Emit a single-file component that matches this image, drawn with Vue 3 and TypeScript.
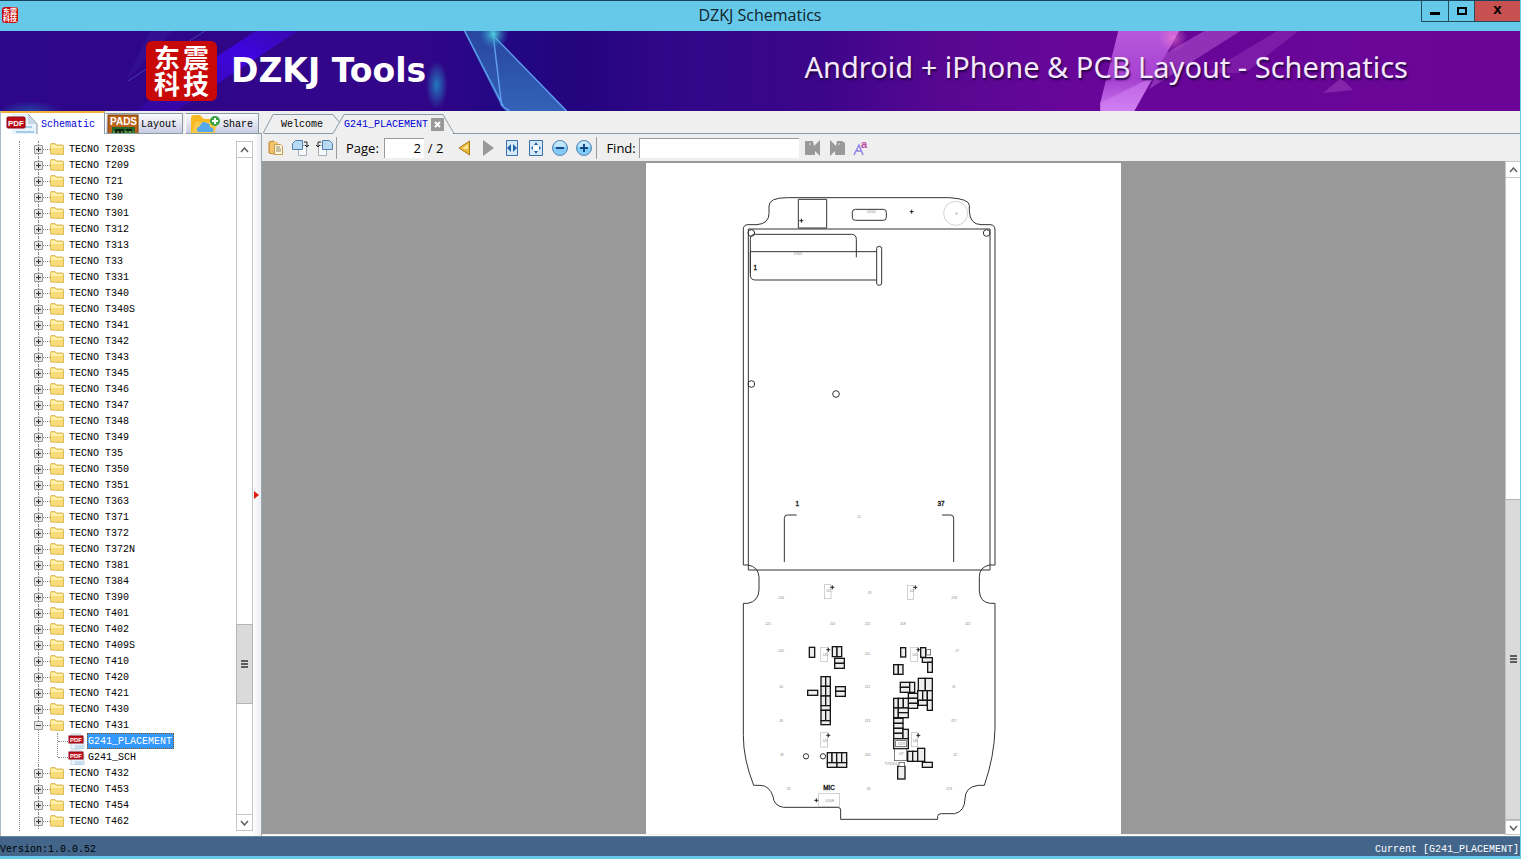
<script setup lang="ts">
import { ref } from 'vue'

interface Folder {
  name: string
  files?: string[]
}

const names = [
  'T203S', 'T209', 'T21', 'T30', 'T301', 'T312', 'T313', 'T33', 'T331', 'T340', 'T340S', 'T341',
  'T342', 'T343', 'T345', 'T346', 'T347', 'T348', 'T349', 'T35', 'T350', 'T351', 'T363', 'T371',
  'T372', 'T372N', 'T381', 'T384', 'T390', 'T401', 'T402', 'T409S', 'T410', 'T420', 'T421', 'T430',
  'T431', 'T432', 'T453', 'T454', 'T462',
]
const folders: Folder[] = names.map((n) => ({
  name: 'TECNO ' + n,
  files: n === 'T431' ? ['G241_PLACEMENT', 'G241_SCH'] : undefined,
}))

const selected = ref('G241_PLACEMENT')
const page = ref('2')
const query = ref('')

type Box = [number, number, number, number]

const leftParts: Box[] = [
  [208, 37, 16, 30], [277, 35, 14, 30], [291, 35, 14, 30], [284, 70, 29, 15], [284, 85, 29, 15],
  [243, 125, 14, 29], [257, 125, 14, 29], [243, 154, 14, 29], [257, 154, 14, 29],
  [243, 183, 14, 29], [257, 183, 14, 29], [243, 212, 28, 14], [243, 226, 14, 31], [257, 226, 14, 31],
  [243, 257, 28, 12], [203, 166, 30, 15], [287, 155, 29, 14], [287, 169, 29, 15],
  [262, 353, 14, 30], [276, 353, 14, 30], [290, 353, 15, 30], [305, 353, 15, 30],
  [262, 383, 29, 14], [291, 383, 29, 14],
]
const rightParts: Box[] = [
  [107, 38, 15, 28], [167, 38, 15, 29], [172, 68, 30, 14], [188, 82, 14, 30],
  [86, 89, 14, 29], [100, 89, 14, 29], [106, 142, 28, 15], [106, 157, 28, 15], [134, 142, 15, 30],
  [160, 130, 21, 37], [181, 130, 21, 37], [130, 175, 28, 15], [130, 190, 28, 15], [130, 205, 28, 15],
  [158, 167, 15, 29], [173, 167, 14, 29], [187, 167, 15, 29], [160, 196, 27, 15], [187, 196, 15, 30],
  [86, 190, 14, 29], [100, 190, 15, 29], [115, 190, 15, 29], [86, 219, 14, 29], [100, 219, 30, 14],
  [100, 233, 30, 15], [86, 250, 28, 15], [86, 265, 28, 15], [86, 280, 28, 15], [86, 295, 28, 16],
  [114, 283, 16, 28], [86, 311, 44, 30], [128, 349, 15, 30], [143, 349, 15, 30],
  [158, 340, 21, 39], [172, 382, 30, 15], [98, 394, 22, 38],
]
const thinParts: Box[] = [[185, 44, 12, 16], [92, 317, 32, 18], [102, 382, 16, 12], [88, 342, 37, 35]]
const fine: [number, number, string][] = [
  [676, 150, 'U202'], [456, 276, 'X301'], [639, 1065, 'J1'], [932, 155, 'K'],
  [405, 1309, 'J16'], [670, 1294, 'J9'], [924, 1309, 'J19'],
  [366, 1387, 'J21'], [559, 1387, 'J14'], [664, 1387, 'J15'], [770, 1387, 'J18'], [965, 1387, 'J22'],
  [405, 1467, 'J20'], [664, 1477, 'J11'], [933, 1467, 'J7'],
  [405, 1574, 'J4'], [664, 1574, 'J12'], [923, 1574, 'J5'],
  [405, 1676, 'J6'], [664, 1676, 'J13'], [923, 1676, 'J17'],
  [407, 1780, 'J8'], [664, 1778, 'J10'], [927, 1780, 'J2'],
  [427, 1881, 'J3'], [667, 1881, 'J0'], [909, 1881, 'J23'],
  [548, 1286, 'U1'], [798, 1286, 'U2'], [538, 1480, 'U3'], [806, 1480, 'U4'],
  [538, 1736, 'U5'], [808, 1736, 'U6'], [551, 1916, 'U108'], [735, 1806, 'TVS501'],
  [766, 1746, 'U19'], [766, 1776, 'U7'],
]
const pluses: [number, number][] = [
  [466, 173], [797, 146], [559, 1273], [808, 1273], [547, 1460], [817, 1460], [547, 1717], [817, 1717], [511, 1912],
]
const outlines: Box[] = [
  [535, 1265, 20, 42], [784, 1267, 18, 42], [524, 1453, 21, 42], [794, 1453, 21, 42],
  [524, 1709, 21, 43], [796, 1709, 19, 42], [518, 1891, 63, 40],
]
</script>

<template>
  <div class="window">
    <header class="titlebar">
      <svg class="smallseal" width="16" height="16" aria-hidden="true">
        <rect width="16" height="16" rx="3" fill="#c90808" />
        <g class="han" font-size="7"><text x="1" y="7">东震</text><text x="1" y="14">科技</text></g>
      </svg>
      <h1>DZKJ Schematics</h1>
      <div class="winbtns">
        <button class="wb" aria-label="Minimize"><svg width="10" height="10"><path d="M0 6h10v3H0z" /></svg></button>
        <button class="wb mid" aria-label="Maximize"><svg width="10" height="10"><path fill-rule="evenodd" d="M0 1h10v8H0zM2 3v4h6V3z" /></svg></button>
        <button class="wb close" aria-label="Close">X</button>
      </div>
    </header>

    <section class="banner">
      <svg class="art" viewBox="0 0 1521 80" preserveAspectRatio="none" aria-hidden="true">
        <defs>
          <linearGradient id="bg">
            <stop offset="0" stop-color="#2d0789" /><stop offset=".27" stop-color="#330589" />
            <stop offset=".33" stop-color="#220783" /><stop offset=".38" stop-color="#23047e" />
            <stop offset=".44" stop-color="#300788" /><stop offset=".54" stop-color="#3c058a" />
            <stop offset=".62" stop-color="#570792" /><stop offset=".7" stop-color="#670699" />
            <stop offset="1" stop-color="#6b0597" />
          </linearGradient>
          <linearGradient id="beam" x1="0" y1="1" x2="1" y2="0">
            <stop offset="0" stop-color="#4209d8" stop-opacity=".2" /><stop offset=".7" stop-color="#3e05df" /><stop offset="1" stop-color="#3a08b8" stop-opacity=".8" />
          </linearGradient>
          <linearGradient id="glass" x1="0" y1="0" x2="0" y2="1">
            <stop offset="0" stop-color="#2850a4" /><stop offset="1" stop-color="#3673c2" />
          </linearGradient>
          <linearGradient id="pink" x1="0" y1="0" x2="0" y2="1">
            <stop offset="0" stop-color="#b859dc" /><stop offset=".6" stop-color="#a640d0" /><stop offset="1" stop-color="#c878f0" />
          </linearGradient>
          <radialGradient id="glow"><stop offset="0" stop-color="#2379bd" /><stop offset="1" stop-color="#2379bd" stop-opacity="0" /></radialGradient>
          <radialGradient id="glow2"><stop offset="0" stop-color="#4fd0dc" /><stop offset="1" stop-color="#2379bd" stop-opacity="0" /></radialGradient>
          <radialGradient id="spark"><stop offset="0" stop-color="#f480cf" stop-opacity=".6" /><stop offset="1" stop-color="#f480cf" stop-opacity="0" /></radialGradient>
        </defs>
        <rect width="1521" height="80" fill="url(#bg)" />
        <path d="M256 0h42L176 80h-42z" fill="url(#beam)" />
        <path d="M150 0h22L126 50zM205 0L126 52" fill="#4436a8" opacity=".2" />
        <path d="M205 0L128 50" stroke="#5366bd" opacity=".6" />
        <ellipse cx="30" cy="80" rx="32" ry="10" fill="url(#glow)" opacity=".5" />
        <ellipse cx="437" cy="54" rx="11" ry="24" fill="url(#glow)" />
        <path d="M464 0h29l1 5L567 80h-61l-4-4z" fill="url(#glass)" opacity=".85" />
        <path d="M465 0L504 76L510 80M493 0L502 75M494 5L567 80" fill="none" stroke="#609cef" stroke-width="1.5" />
        <circle cx="494" cy="3" r="15" fill="url(#glow2)" />
        <path d="M1119 0h61l-45 80h-34v-8z" fill="url(#pink)" />
        <path d="M1101 72L1167 39L1152 50L1135 80h-34z" fill="#d784f4" opacity=".5" />
        <path d="M1205 0h36L1150 58L1167 22z" fill="#a648c8" opacity=".65" />
        <path d="M1278 0h21l-53 42h-38z" fill="#9a3cbd" opacity=".4" />
        <path d="M1342 47l12 12l-30 3z" fill="#9837b8" opacity=".6" />
        <circle cx="1174" cy="7" r="14" fill="url(#spark)" />
      </svg>
      <svg class="bigseal" width="71" height="60" role="img" aria-label="东震科技">
        <rect width="71" height="60" rx="6" fill="#c90808" />
        <g class="han" font-size="26">
          <text x="8" y="27">东</text><text x="37" y="27">震</text>
          <text x="8" y="53">科</text><text x="37" y="53">技</text>
        </g>
      </svg>
      <strong class="brand">DZKJ Tools</strong>
      <span class="slogan">Android + iPhone &amp; PCB Layout - Schematics</span>
    </section>

    <main class="body">
      <aside class="side">
        <nav class="sidetabs">
          <button class="stab active">
            <svg width="32" height="20" viewBox="0 0 32 20" aria-hidden="true">
              <path d="M6 0h16l9 10v10H6z" fill="#e8f2fa" /><path d="M22 0l9 10v10" fill="none" stroke="#8996a4" />
              <path d="M22 1v9h8z" fill="#c5d7e7" /><path d="M12 12h14v2H12zM10 17h18v2H10z" fill="#a5cce9" />
              <rect x="1" y="3" width="18" height="11" rx="1" fill="#bd0c16" stroke="#8e0710" />
              <text x="2" y="12" font-size="8" font-weight="bold" fill="#fff">PDF</text>
            </svg>
            <span>Schematic</span>
          </button>
          <button class="stab">
            <svg width="32" height="20" viewBox="0 0 32 20" aria-hidden="true">
              <rect x="1" y="1" width="30" height="22" fill="#bd6318" stroke="#76400d" />
              <rect x="5" y="13" width="23" height="7" fill="#26672b" /><path d="M8 15h9v5H8zM19 15h6v2h-6z" fill="#11220f" /><path d="M6 18h21" stroke="#8bc458" stroke-dasharray="2 2" />
              <text x="3" y="11" font-size="10" font-weight="bold" fill="#fff">PADS</text>
            </svg>
            <span>Layout</span>
          </button>
          <button class="stab">
            <svg width="32" height="20" viewBox="0 0 32 20" aria-hidden="true">
              <path d="M3 20V4q0-3 3-3h6l4 4h8q3 0 3 3v12z" fill="#f9b923" /><path d="M3 20L8 8h22l-4 12z" fill="#fcca4a" />
              <path d="M10 18q-3-4 2-6q2-6 7-3q3 0 3 4q5 1 3 5z" fill="#55a9ec" />
              <circle cx="27" cy="7" r="5" fill="#37a446" /><path d="M27 4v6M24 7h6" stroke="#fff" stroke-width="2" />
            </svg>
            <span>Share</span>
          </button>
          <span class="tabfill"></span>
        </nav>
        <div class="sidebody">
          <div class="treewrap">
            <ul class="tree">
              <li v-for="f in folders" :key="f.name">
                <button class="row">
                  <svg class="exp" width="9" height="9" aria-hidden="true"><path d="M.5.5h8v8h-8z" fill="#e6e6e6" stroke="#9b9b9b" /><path :d="f.files ? 'M2 4.5h5' : 'M2 4.5h5M4.5 2v5'" stroke="#333" /></svg>
                  <i class="dots"></i>
                  <svg width="14" height="12" viewBox="0 0 14 12" aria-hidden="true"><path d="M.5 11V1.500q0-1 1-1h3.500l1 1.500h6.500q1 0 1 1v8.500z" fill="#f8dc7c" stroke="#dfb958" /><path d="M1 4h12M1 3h5" stroke="#fff0a8" stroke-width="2" /></svg>
                  <span class="name">{{ f.name }}</span>
                </button>
                <ul v-if="f.files" class="sub">
                  <li v-for="c in f.files" :key="c">
                    <button class="row child" @click="selected = c">
                      <i class="dots"></i>
                      <svg width="17" height="16" viewBox="0 0 17 16" aria-hidden="true">
                        <path d="M3 1h9l4 4v11H3z" fill="#eaf3fa" stroke="#c5d5e2" /><path d="M7 13h8M7 15h8" stroke="#9fc7e4" />
                        <rect x="1" y="3" width="14" height="7" fill="#c4131c" stroke="#8e0710" />
                        <text x="2" y="9" font-size="6" font-weight="bold" fill="#fff">PDF</text>
                      </svg>
                      <span class="name" :class="{ sel: selected === c }">{{ c }}</span>
                    </button>
                  </li>
                </ul>
              </li>
            </ul>
          </div>
          <div class="scroll left">
            <button aria-label="Scroll up"><svg width="9" height="6"><path d="M1 5L4.500 1L8 5" /></svg></button>
            <div class="track"><div class="thumb"><i></i></div></div>
            <button aria-label="Scroll down"><svg width="9" height="6"><path d="M1 1L4.500 5L8 1" /></svg></button>
          </div>
          <div class="splitter"><svg width="5" height="8" aria-hidden="true"><path d="M0 0l5 4l-5 4z" fill="#e01b10" /></svg></div>
        </div>
      </aside>

      <section class="doc">
        <nav class="doctabs">
          <svg class="tabshape" width="191" height="23" aria-hidden="true">
            <path d="M0 22.500L10 3.500H70L77 12" fill="none" stroke="#8a9ba8" />
            <path d="M1 22.500H70L81 3.500H180L191 22.500" fill="none" stroke="#8a9ba8" />
            <path d="M71 22.500h119" stroke="#efefef" />
          </svg>
          <button class="dtab first">Welcome</button>
          <button class="dtab current">G241_PLACEMENT</button>
          <button class="tabclose" aria-label="Close tab"><svg width="13" height="13"><path d="M4 4l5 5M9 4l-5 5" stroke="#fff" stroke-width="2" /></svg></button>
          <span class="tabfill"></span>
        </nav>

        <div class="toolbar">
          <button class="tool" aria-label="Open">
            <svg width="16" height="16"><path d="M1 2l5-1v13l-5-1z" fill="#e3a845" stroke="#c18a3a" /><path d="M2 2h8v11H2z" fill="#f2c56d" /><path d="M6.500 4.500h6l2 2v8h-8z" fill="#fff8dd" stroke="#c69b4f" /><path d="M8 7h4M8 9h5M8 11h5" stroke="#928468" /></svg>
          </button>
          <button class="tool" aria-label="Rotate right">
            <svg width="17" height="16"><path d="M8.500 5.500h6v10h-8v-8z" fill="#f7f9fb" stroke="#a3afba" /><path d="M3.500 .5h7v9h-10v-6z" fill="#b8daf4" stroke="#517fab" /><path d="M12 2h3v4M13 5l2 2l2-2" fill="none" stroke="#222" /></svg>
          </button>
          <button class="tool" aria-label="Rotate left">
            <svg width="17" height="16"><path d="M2.500 5.500h6l2 2v8h-8z" fill="#f7f9fb" stroke="#a3afba" /><path d="M6.500 .5h7l3 3v6h-10z" fill="#b8daf4" stroke="#517fab" /><path d="M5 2H2v4M0 5l2 2l2-2" fill="none" stroke="#222" /></svg>
          </button>
          <i class="sep"></i>
          <label class="lbl" for="page">Page:</label>
          <input id="page" v-model="page" class="pageno" type="text" />
          <span class="total">/ 2</span>
          <button class="tool" aria-label="Previous page"><svg width="13" height="16"><path d="M11.500 1v14L1 8z" fill="#ebba38" stroke="#a67b20" /><path d="M10 4v5H4z" fill="#ffe69a" /></svg></button>
          <button class="tool" aria-label="Next page"><svg width="12" height="16"><path d="M1 0v16L12 8z" fill="#999" /></svg></button>
          <button class="tool" aria-label="Fit width"><svg width="12" height="16"><path d="M.5.5h11v15H.5z" fill="#d4eafb" stroke="#376eab" /><path d="M5 4v8L1 8zM7 4v8l4-4z" fill="#28659f" /></svg></button>
          <button class="tool" aria-label="Fit page"><svg width="14" height="16"><path d="M.5.5h13v15H.5z" fill="#d4eafb" stroke="#376eab" /><path d="M7 2l2 3H5zM7 14l2-3H5zM2 8l2-2v4zM12 8l-2-2v4z" fill="#28659f" /><circle cx="7" cy="8" r="3" fill="#f8fcff" /></svg></button>
          <button class="tool" aria-label="Zoom out"><svg width="16" height="16"><circle cx="8" cy="8" r="7.500" fill="#83caf7" stroke="#5387ae" /><path d="M2 7a6 6 0 0 1 12 0z" fill="#c1e5fb" /><path d="M4 8h8" stroke="#104c83" stroke-width="2" /></svg></button>
          <button class="tool" aria-label="Zoom in"><svg width="16" height="16"><circle cx="8" cy="8" r="7.500" fill="#83caf7" stroke="#5387ae" /><path d="M2 7a6 6 0 0 1 12 0z" fill="#c1e5fb" /><path d="M4 8h8M8 4v8" stroke="#104c83" stroke-width="2" /></svg></button>
          <i class="sep"></i>
          <label class="lbl" for="find">Find:</label>
          <input id="find" v-model="query" class="find" type="text" />
          <button class="tool" aria-label="Find previous"><svg width="16" height="16"><path d="M0 1h8l1 5l6-6v16l-5-5v4H0z" fill="#999" /><circle cx="5" cy="4" r="1" fill="#ccc" /></svg></button>
          <button class="tool" aria-label="Find next"><svg width="16" height="16"><path d="M16 3l-3-2H8L7 6L1 0v16l5-5v4h10z" fill="#999" /><circle cx="10" cy="4" r="1" fill="#ccc" /></svg></button>
          <button class="tool" aria-label="Match case"><svg class="case" width="15" height="16"><path d="M1 15L6 5l4 10M3 11h6" fill="none" stroke="#8c83ec" stroke-width="1.500" /><text x="8" y="8" font-size="11" font-weight="bold" fill="#b84aa6">a</text></svg></button>
        </div>

        <div class="viewer">
          <div class="canvas">
            <svg class="sheet" viewBox="0 0 1425 2013" role="img" aria-label="G241 placement drawing">
              <rect width="1425" height="2013" fill="#fff" />
              <g fill="none" stroke="#333" stroke-width="3">
                <path d="M292 1206V199Q292 185 306 185H333Q369 182 369 151V129Q369 104 424 104H910Q970 108 970 127V145Q972 184 1005 185H1032Q1047 185 1047 201V1206H1031Q1000 1212 1000 1241V1284Q1002 1318 1033 1321H1047V1696Q1045 1780 1015 1867H996Q957 1872 957 1908Q956 1945 926 1952H886Q875 1952 875 1960V1969H584V1941Q584 1933 574 1933H412Q383 1928 381 1900Q370 1867 342 1867H323Q292 1788 292 1718V1321H306Q338 1314 339 1281V1241Q336 1211 306 1206Z" />
                <path d="M307 198H1032V1221H307Z" />
                <path d="M457 109H542V195H457Z" /><rect x="619" y="139" width="102" height="33" rx="9" />
                <circle cx="316" cy="210" r="10" /><circle cx="1022" cy="210" r="10" /><circle cx="316" cy="663" r="10" /><circle cx="570" cy="693" r="10" />
                <path d="M313 330V229Q313 214 328 214H616Q631 214 631 229V283M313 266H692M692 351H328Q313 351 313 336V266" />
                <rect x="692" y="250" width="15" height="117" rx="7" />
                <path d="M452 1056H424Q415 1056 415 1066V1197M888 1056H914Q923 1056 923 1066V1197" />
                <circle cx="480" cy="1780" r="8" /><circle cx="531" cy="1780" r="8" />
              </g>
              <circle cx="929" cy="151" r="36" class="faint" />
              <rect v-for="(o, i) in outlines" :key="'o' + i" :x="o[0]" :y="o[1]" :width="o[2]" :height="o[3]" class="faint" />
              <g transform="translate(282 1416)" class="part"><rect v-for="(p, i) in leftParts" :key="i" :x="p[0]" :y="p[1]" :width="p[2]" :height="p[3]" /></g>
              <g transform="translate(657 1416)" class="part"><rect v-for="(p, i) in rightParts" :key="i" :x="p[0]" :y="p[1]" :width="p[2]" :height="p[3]" /></g>
              <g transform="translate(657 1416)" class="part thin"><rect v-for="(p, i) in thinParts" :key="i" :x="p[0]" :y="p[1]" :width="p[2]" :height="p[3]" /></g>
              <path v-for="(p, i) in pluses" :key="'p' + i" :d="`M${p[0] - 6} ${p[1]}h12M${p[0]} ${p[1] - 6}v12`" stroke="#222" stroke-width="3" />
              <text v-for="(t, i) in fine" :key="'t' + i" :x="t[0]" :y="t[1]" class="tiny">{{ t[2] }}</text>
              <g class="mark"><text x="328" y="322">1</text><text x="454" y="1030">1</text><text x="885" y="1030">37</text><text x="549" y="1880">MIC</text></g>
            </svg>
          </div>
          <div class="scroll right">
            <button aria-label="Page up"><svg width="9" height="6"><path d="M1 5L4.500 1L8 5" /></svg></button>
            <div class="track"><div class="thumb"><i></i></div></div>
            <button aria-label="Page down"><svg width="9" height="6"><path d="M1 1L4.500 5L8 1" /></svg></button>
          </div>
        </div>
      </section>
    </main>

    <footer class="status"><span>Version:1.0.0.52</span><span class="cur">Current [{{ selected }}]</span></footer>
  </div>
</template>

<style>
body { margin: 0; overflow: hidden; }
</style>

<style scoped>
* { box-sizing: border-box; }
.window { height: 100vh; display: flex; flex-direction: column; background: #efefef; border-bottom: 3px solid #67c9ea; border-right: 1px solid #67c9ea; font: 10px/16px "Liberation Mono", monospace; color: #000; }
button { margin: 0; padding: 0; border: 0; background: none; font: inherit; color: inherit; }
svg { display: block; flex: none; }
svg text { font-family: "Liberation Sans", sans-serif; }
.titlebar { height: 31px; flex: none; background: #67c9ea; border-top: 1px solid #17435c; display: grid; grid-template-columns: 1fr auto 1fr; align-items: start; }
h1 { margin: 0; font: 16px/28px "Open Sans", sans-serif; color: #10222b; }
.han text { font-family: "Noto Sans CJK SC", sans-serif; font-weight: bold; fill: #fff; }
.smallseal { margin: 6px 2px; }
.bigseal { position: relative; margin-left: 146px; overflow: visible; }
.winbtns { display: flex; justify-content: flex-end; height: 21px; }
.wb { width: 28px; border: 1px solid #264b5b; border-top: 0; display: flex; align-items: center; justify-content: center; }
.wb.mid { border-left: 0; width: 26px; }
.wb.close { width: 45px; background: #c75050; border-left: 0; border-right: 0; font: bold 11px/20px "DejaVu Sans", sans-serif; }
.banner { height: 80px; flex: none; position: relative; display: flex; align-items: center; color: #fff; overflow: hidden; }
.art { position: absolute; inset: 0; width: 100%; height: 100%; }
.brand { position: relative; margin-left: 14px; font: bold 33px/76px "DejaVu Sans", sans-serif; white-space: nowrap; }
.slogan { position: relative; margin-left: auto; margin-right: 112px; font: 29px/72px "Noto Sans", sans-serif; color: #f6e8fc; text-shadow: 1px 2px 2px #200040; margin-bottom: 8px; white-space: nowrap; }
.body { flex: 1; min-height: 0; display: flex; }
.side { width: 262px; flex: none; display: flex; flex-direction: column; border-left: 1px solid #a9bac5; }
.sidetabs { height: 23px; flex: none; display: flex; align-items: flex-end; }
.stab { height: 21px; width: 78px; display: flex; align-items: center; gap: 2px; padding-left: 1px; border: 1px solid #8a9ba8; border-left-color: #fff; background: linear-gradient(#fbfbfd, #c9cde2); overflow: hidden; white-space: nowrap; }
.stab span { padding-top: 2px; }
.stab:nth-child(3) { width: 74px; margin-left: 2px; padding-left: 2px; gap: 3px; }
.stab.active { width: 104px; height: 23px; background: #fff; border: 0; border-top: 2px solid #f5ae3c; border-right: 1px solid #8a9ba8; color: #0000d8; padding-left: 5px; gap: 3px; }
.tabfill { flex: 1; border-bottom: 1px solid #8a9ba8; }
.sidebody { flex: 1; min-height: 0; display: flex; background: #fff; }
.treewrap { flex: 1; min-width: 0; margin: 7px 0 5px; overflow: hidden; position: relative; }
.treewrap::before { content: ""; position: absolute; left: 18px; top: 0; bottom: 0; border-left: 1px dotted #888; }
ul { list-style: none; margin: 0; padding: 0; }
.tree > li { position: relative; }
.tree > li::before { content: ""; position: absolute; left: 37px; top: 0; bottom: 0; border-left: 1px dotted #888; }
.row { position: relative; display: flex; align-items: center; height: 16px; padding-left: 33px; white-space: nowrap; }
.dots { width: 7px; flex: none; border-top: 1px dotted #888; }
.name { margin-left: 4px; padding: 2px 1px 0 0; line-height: 12px; border: 1px dotted transparent; }
.sub { position: relative; }
.sub::before { content: ""; position: absolute; left: 56px; top: 0; height: 24px; border-left: 1px dotted #888; }
.child { padding-left: 57px; }
.child .dots { width: 10px; }
.child .name { margin-left: 2px; }
.sel { background: #3399ff; color: #fff; border-color: #805020; }
.scroll { display: flex; flex-direction: column; width: 17px; flex: none; }
.scroll button { height: 17px; flex: none; background: #fff; border: 1px solid #c6c6c6; display: flex; align-items: center; justify-content: center; }
.scroll path { fill: none; stroke: #606060; stroke-width: 1.5; }
.track { flex: 1; display: flex; flex-direction: column; background: #fff; border: solid #c6c6c6; border-width: 0 1px; }
.thumb { background: #dadada; border: 1px solid #b5b5b5; display: flex; align-items: center; justify-content: center; }
.thumb i { width: 7px; height: 8px; background: repeating-linear-gradient(#5d5d5d 0 2px, transparent 2px 3px); }
.left { margin: 7px 0 5px; }
.left .thumb { margin: 0 -1px; flex: 78; }
.left .track::before { content: ""; flex: 467; }
.left .track::after { content: ""; flex: 110; }
.right { width: 15px; background: #fff; }
.right button { height: 15px; border-width: 1px 0 1px 1px; }
.right button:first-child { height: 17px; }
.right .track { border-right: 0; }
.right .track::before { content: ""; flex: 321; }
.right .thumb { flex: 320; border-width: 1px 0; }
.splitter { width: 9px; background: linear-gradient(90deg, #fff, #ededf0); border-right: 1px solid #9aabb7; display: flex; align-items: center; padding: 20px 0 0 1px; }
.doc { flex: 1; min-width: 0; display: flex; flex-direction: column; }
.doctabs { position: relative; height: 23px; flex: none; display: flex; align-items: center; padding-left: 19px; }
.tabshape { position: absolute; left: 1px; top: 0; }
.dtab { position: relative; padding-top: 5px; }
.first { width: 63px; text-align: left; }
.current { color: #0000d8; }
.tabclose { position: relative; width: 13px; height: 13px; margin: 4px 18px 0 3px; background: #999; }
.doctabs .tabfill { align-self: stretch; margin-left: -9px; }
.toolbar { height: 27px; flex: none; display: flex; align-items: center; padding-left: 5px; font: 13px/20px "Open Sans", sans-serif; }
.tool { width: 24px; height: 24px; flex: none; display: flex; align-items: center; justify-content: center; }
.tool:first-child { margin-left: -3px; }
.case { overflow: visible; }
.sep { width: 1px; height: 22px; background: #9a9a9a; flex: none; }
.lbl { margin-left: 9px; white-space: nowrap; }
input { height: 20px; border: 0; border-top: 1px solid #999; border-left: 1px solid #999; padding: 0 3px; background: #fff; font: inherit; outline: 0; border-radius: 0; }
.pageno { width: 40px; margin-left: 5px; text-align: right; }
.total { margin: 0 9px 0 4px; white-space: nowrap; }
.find { width: 160px; margin: 0 2px 0 3px; }
.viewer { flex: 1; min-height: 0; display: flex; border-bottom: 1px solid #fff; }
.canvas { flex: 1; min-width: 0; background: #999; display: flex; justify-content: center; padding-top: 2px; margin-bottom: 1px; }
.sheet { height: 100%; aspect-ratio: 475 / 671; }
.faint { fill: none; stroke: #bbb; stroke-width: 2; }
.part { fill: #eee; stroke: #161616; stroke-width: 4; }
.part.thin { fill: #fff; stroke: #444; stroke-width: 2; }
.sheet .tiny { font-size: 11px; fill: #888; text-anchor: middle; }
.mark { font-size: 19px; fill: #111; stroke: #111; text-anchor: middle; }
.status { height: 20px; flex: none; background: #426589; border-top: 1px solid #6a8496; display: flex; justify-content: space-between; line-height: 26px; white-space: nowrap; overflow: hidden; }
.cur { color: #fff; padding-right: 1px; }
</style>
